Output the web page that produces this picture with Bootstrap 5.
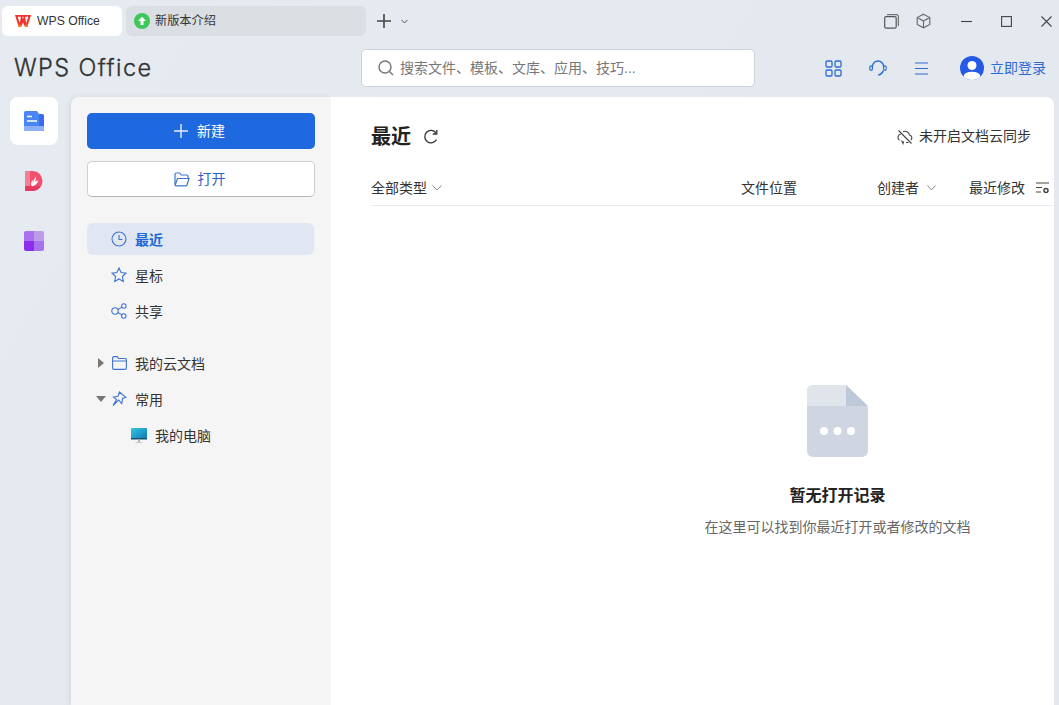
<!DOCTYPE html>
<html lang="zh-CN">
<head>
<meta charset="utf-8">
<title>WPS Office</title>
<link href="https://cdn.jsdelivr.net/npm/bootstrap@5.3.0/dist/css/bootstrap.min.css" rel="stylesheet">
<style>
html,body{height:100%;margin:0;overflow:hidden}
body{font-family:"Liberation Sans","Noto Sans CJK SC",sans-serif;font-size:14px;color:#333;background:linear-gradient(120deg,#e6ebf1,#e4e9f0 60%,#e3e8ef)}
svg{display:block;flex:none}
.app-shell{width:1059px;height:705px}
.tab-strip{height:36px;padding:6px 0 0 2px}
.wps-tab{height:30px;border-radius:6px;font-size:12.2px;color:#333}
.tab-home{width:120px;background:#fff;padding-left:13px;gap:6px}
.tab-new{width:240px;background:#dadfe4;margin-left:4px;padding-left:8px;gap:5px}
.new-dot{width:16px;height:16px;border-radius:50%;background:#3dc85a}
.tab-add{margin-left:11px;gap:10px;height:30px}
.win-tools{margin-left:auto;height:30px;padding-right:7px}
.win-a{margin-right:17px}
.win-b{margin-left:29px}
.win-first{margin-left:30px}
.tool-row{height:61px;padding-top:3px}
.brand-word{font-family:"Inter",sans-serif;font-weight:300;font-size:23.5px;letter-spacing:1.4px;color:#333;margin-left:14px;width:347px;line-height:1;-webkit-text-stroke:.35px #333}
.search-box{width:394px;height:38px;background:#fff;border:1px solid #cfd3d9;border-radius:5px;padding-left:15px;gap:5px;color:#777;font-size:14px}
.top-icons{margin-left:70px}
.top-i{width:44px}
.top-i-wide{width:46px}
.top-i-menu{width:45px}
.user-dot{width:24px;height:24px;border-radius:50%;background:#2559e6;overflow:hidden}
.login-link{color:#2a69d6;font-size:14px;margin-left:6px}
.main-area{height:608px}
.rail-col{width:71px;padding:0 13px 0 10px}
.rail-item{width:48px;height:48px;border-radius:8px;margin-bottom:12px}
.rail-on{background:#fff}
.side-col{width:260px;background:#f5f5f5;border-top-left-radius:8px;padding:16px;box-shadow:-2px 0 5px rgba(80,90,110,.1)}
.new-btn{width:228px;height:36px;background:#1f69e0;color:#fff;border:0;border-radius:5px;font-size:14px;gap:9px;padding:0 3px 0 0}
.open-btn{width:228px;height:36px;background:#fff;color:#2a62c8;border:1px solid #cfcfcf;border-bottom-color:#b5b5b5;border-radius:5px;font-size:14px;gap:8px;margin-top:12px;padding:0 3px 0 0}
.new-btn:hover{background:#1f69e0;color:#fff}
.open-btn:hover{background:#fff;color:#2a62c8}
.side-nav{margin-top:26px}
.side-row{height:36px;padding-left:24px;gap:8px;color:#333}
.side-row span{padding-top:2px}
.side-on{height:32px;width:227px;background:#e0e7f2;border-radius:6px;color:#2167d8;font-weight:700;margin-bottom:2px}
.side-gap{margin-top:16px}
.arrow-right{margin-left:-14px;margin-right:-1px}
.arrow-down{margin-left:-15px;margin-right:-3px}
.side-sub{padding-left:44px}
.content-col{width:723px;background:#fff;border-top-right-radius:8px;padding:0 0 0 40px}
.head-row{height:79px;padding-right:23px}
.page-name{font-size:20px;font-weight:700;color:#222;margin:0;line-height:1}
.reload-mark{margin-left:12px}
.sync-note{margin-left:auto;gap:6px;color:#333}
.filter-row{height:30px;border-bottom:1px solid #eaedf0;padding-bottom:5px;color:#333}
.type-cell{width:74px;gap:5px}
.col-place{margin-left:296px}
.col-maker{margin-left:80px;gap:8px}
.col-date{margin-left:33px}
.filter-cog{margin-left:11px}
.empty-wrap{margin:179px 0 0 250px}
.empty-name{font-size:16px;font-weight:700;color:#222;margin:29px 0 0;line-height:20px}
.empty-note{font-size:14px;color:#666;margin:11px 0 0;line-height:20px}
</style>
</head>
<body>
<div class="app-shell d-flex flex-column">
  <div class="tab-strip d-flex align-items-start">
    <div class="wps-tab tab-home d-flex align-items-center">
      <svg width="16" height="12" viewBox="0 0 16 12"><path d="M0 0h16l-3.700 12H10L8 7.500 6 12H3.700Z" fill="#f0332a"/><path d="M2.700 1.800h3.200L4.800 8.200ZM13.300 1.800h-3.200l1.100 6.400ZM7.300 1.800h1.400L8 4.300Z" fill="#fff"/><path d="M3.700 12 3 9.500h2.800L6 12ZM10 12l.2-2.500H13l-.7 2.500Z" fill="#f7772a"/></svg>
      <span>WPS Office</span>
    </div>
    <div class="wps-tab tab-new d-flex align-items-center">
      <span class="new-dot d-flex align-items-center justify-content-center"><svg width="10" height="10" viewBox="0 0 10 10"><path d="M5 .8 9 5H6.500v4h-3V5H1Z" fill="#fff"/></svg></span>
      <span>新版本介绍</span>
    </div>
    <div class="tab-add d-flex align-items-center">
      <svg width="14" height="14" viewBox="0 0 14 14"><path d="M7 0v14M0 7h14" stroke="#444" stroke-width="1.600"/></svg>
      <svg width="7" height="5" viewBox="0 0 7 5"><path d="M.4.800 3.500 4 6.600.800" stroke="#555" fill="none"/></svg>
    </div>
    <div class="win-tools d-flex align-items-center">
      <svg class="win-a" width="15" height="15" viewBox="0 0 15 15"><rect x=".7" y="2.700" width="11.500" height="11.500" rx="1.500" fill="none" stroke="#555" stroke-width="1.200"/><path d="M3 .7h10a1.300 1.300 0 0 1 1.300 1.300v10" fill="none" stroke="#555"/></svg>
      <svg width="15" height="16" viewBox="0 0 15 16"><path d="M7.500 1.200 13.800 4.500v7L7.500 14.800 1.200 11.500v-7ZM1.200 4.500 7.500 8l6.300-3.500M7.500 8v6.800" fill="none" stroke="#666" stroke-width="1.100"/></svg>
      <svg class="win-first" width="11" height="11" viewBox="0 0 11 11"><path d="M0 5.500h11" stroke="#444" stroke-width="1.100"/></svg>
      <svg class="win-b" width="11" height="11" viewBox="0 0 11 11"><rect x=".6" y=".6" width="9.800" height="9.800" fill="none" stroke="#444" stroke-width="1.100"/></svg>
      <svg class="win-b" width="11" height="11" viewBox="0 0 11 11"><path d="M.5.500l10 10M10.500.500l-10 10" stroke="#444" stroke-width="1.100"/></svg>
    </div>
  </div>

  <div class="tool-row d-flex align-items-center">
    <div class="brand-word">WPS Office</div>
    <div class="search-box d-flex align-items-center">
      <svg width="18" height="18" viewBox="0 0 18 18"><circle cx="8" cy="8" r="6" fill="none" stroke="#777" stroke-width="1.400"/><path d="m12.500 12.500 3.500 3.500" stroke="#777" stroke-width="1.400"/></svg>
      <span>搜索文件、模板、文库、应用、技巧...</span>
    </div>
    <div class="top-icons d-flex align-items-center">
      <div class="top-i"><svg width="17" height="17" viewBox="0 0 17 17" fill="none" stroke="#2f6bd0" stroke-width="1.300"><rect x="1" y="1" width="6" height="6" rx="1.200"/><rect x="10" y="1" width="6" height="6" rx="1.200"/><rect x="1" y="10" width="6" height="6" rx="1.200"/><rect x="10" y="10" width="6" height="6" rx="1.200"/></svg></div>
      <div class="top-i-wide"><svg width="18" height="16" viewBox="0 0 18 16" fill="none" stroke="#2f6bd0" stroke-width="1.500"><path d="M3.300 7.500V6.800a5.700 5.700 0 0 1 11.400 0v.7"/><path d="M14.200 10.500c-.6 2.500-2.500 4-5 4.400"/><rect x=".8" y="5.800" width="2.600" height="4.600" rx="1.300" stroke-width="1.100"/><rect x="14.600" y="5.800" width="2.600" height="4.600" rx="1.300" stroke-width="1.100"/></svg></div>
      <div class="top-i-menu"><svg width="13" height="13" viewBox="0 0 13 13" stroke="#2f6bd0" stroke-width="1.200"><path d="M0 1h13M0 6.500h13M0 12h13"/></svg></div>
      <div class="user-dot"><svg width="24" height="24" viewBox="0 0 24 24"><circle cx="12" cy="9.500" r="4.500" fill="#fff"/><ellipse cx="12" cy="20.500" rx="8.500" ry="4.800" fill="#fff"/></svg></div>
      <span class="login-link">立即登录</span>
    </div>
  </div>

  <div class="main-area d-flex">
    <div class="rail-col d-flex flex-column">
      <div class="rail-item rail-on d-flex align-items-center justify-content-center">
        <svg width="20" height="20" viewBox="0 0 20 20"><path d="M10 3h8.500A1.500 1.500 0 0 1 20 4.500V20H10Z" fill="#3f69ef"/><path d="M1.500 0H13l2 3v17H1.500A1.500 1.500 0 0 1 0 18.500v-17A1.500 1.500 0 0 1 1.500 0Z" fill="#4a86f3"/><path d="M0 15h20v3.500a1.500 1.500 0 0 1-1.500 1.500h-17A1.500 1.500 0 0 1 0 18.500Z" fill="#8bb0f8"/><path d="M3 5.500h5M3 10h10" stroke="#fff" stroke-width="1.600"/></svg>
      </div>
      <div class="rail-item d-flex align-items-center justify-content-center">
        <svg width="18" height="20" viewBox="0 0 18 20"><path d="M1 0h7a9.500 10 0 0 1 0 20H1a1 1 0 0 1-1-1V1a1 1 0 0 1 1-1Z" fill="#f2506f"/><path d="M0 1a1 1 0 0 1 1-1h4v15H0Z" fill="#f57e96"/><path d="M0 15h15.700a9.500 10 0 0 1-7.700 5H1a1 1 0 0 1-1-1Z" fill="#e63a60"/><path d="M7 15.500c-1.500-2-1.300-4.500.7-6.500.3 1.500.2 2.500.2 3.500.2-2.500 2-5 2.600-7 .7 2 .3 4-1 5.800 1-1 2.500-1.700 3.800-1.800-.6 2.800-3 5-6.300 6Z" fill="#fff"/></svg>
      </div>
      <div class="rail-item d-flex align-items-center justify-content-center">
        <svg width="20" height="20" viewBox="0 0 20 20"><path d="M2 0h8v10H0V2a2 2 0 0 1 2-2Z" fill="#a872ee"/><path d="M10 0h8a2 2 0 0 1 2 2v8H10Z" fill="#bd9bea"/><path d="M0 10h10v10H2a2 2 0 0 1-2-2Z" fill="#8b2eee"/><path d="M10 10h10v8a2 2 0 0 1-2 2h-8Z" fill="#a872ee"/></svg>
      </div>
    </div>

    <div class="side-col">
      <button type="button" class="btn new-btn d-flex align-items-center justify-content-center">
        <svg width="14" height="14" viewBox="0 0 14 14"><path d="M7 0v14M0 7h14" stroke="#e8eefb" stroke-width="1.400"/></svg>新建
      </button>
      <button type="button" class="btn open-btn d-flex align-items-center justify-content-center">
        <svg width="16" height="15" viewBox="0 0 16 15" fill="none" stroke="#3d74d0" stroke-width="1.200"><path d="M1 12.500V2.500A1.500 1.500 0 0 1 2.500 1h3.200l1.500 2h5.300A1.500 1.500 0 0 1 14 4.500V6"/><path d="M1 13.500 3.500 6.500H15l-2 6.500a1 1 0 0 1-1 .8H2a1 1 0 0 1-1-.8Z"/></svg>打开
      </button>
      <div class="side-nav d-flex flex-column">
        <div class="side-row side-on d-flex align-items-center">
          <svg width="16" height="16" viewBox="0 0 16 16" fill="none" stroke="#3d74d0" stroke-width="1.100"><circle cx="8" cy="8" r="7"/><path d="M8 4v4.500h3.500"/></svg><span>最近</span>
        </div>
        <div class="side-row d-flex align-items-center">
          <svg width="16" height="16" viewBox="0 0 16 16" fill="none" stroke="#3d74d0" stroke-width="1.100"><path d="m8 1 2.100 4.500 4.900.6-3.600 3.400.9 4.900L8 12l-4.300 2.400.9-4.900L1 6.100l4.900-.6Z"/></svg><span>星标</span>
        </div>
        <div class="side-row d-flex align-items-center">
          <svg width="16" height="16" viewBox="0 0 16 16" fill="none" stroke="#3d74d0" stroke-width="1.100"><circle cx="4" cy="8" r="3.200"/><circle cx="12.800" cy="3" r="2.200"/><circle cx="12.800" cy="13" r="2.200"/><path d="m7 6.500 3.900-2.400M7 9.500l3.900 2.400"/></svg><span>共享</span>
        </div>
        <div class="side-row side-gap d-flex align-items-center">
          <svg class="arrow-right" width="8" height="10" viewBox="0 0 8 10"><path d="M1 0v10l6-5Z" fill="#777"/></svg>
          <svg width="15" height="14" viewBox="0 0 15 14" fill="none" stroke="#3d74d0" stroke-width="1.100"><path d="M.6 3.500V2A1.400 1.400 0 0 1 2 .6h3.200l1.300 1.900h6.500A1.400 1.400 0 0 1 14.400 4v8A1.400 1.400 0 0 1 13 13.400H2A1.400 1.400 0 0 1 .6 12ZM.6 5h13.800"/></svg><span>我的云文档</span>
        </div>
        <div class="side-row d-flex align-items-center">
          <svg class="arrow-down" width="10" height="8" viewBox="0 0 10 8"><path d="M0 1h10L5 7Z" fill="#777"/></svg>
          <svg width="16" height="16" viewBox="0 0 16 16" fill="none" stroke="#3d74d0" stroke-width="1.100"><path d="M8.500 1 15 6.500l-3.300.8-1 5.200-3-3.500L2 14.500l3.500-6L2.500 6l4.500-.8Z"/></svg><span>常用</span>
        </div>
        <div class="side-row side-sub d-flex align-items-center">
          <svg width="16" height="15" viewBox="0 0 16 15"><defs><linearGradient id="screenFill" x1="0" y1="0" x2="1" y2="1"><stop offset="0" stop-color="#35c5dd"/><stop offset="1" stop-color="#0d79b8"/></linearGradient></defs><rect width="16" height="11" rx="1" fill="url(#screenFill)"/><path d="M0 10h16v1.500H0Z" fill="#15536e"/><path d="M7 11.500h2V14H7Z" fill="#a9b7c2"/><path d="M4.500 14h7v1h-7Z" fill="#c2ccd4"/></svg><span>我的电脑</span>
        </div>
      </div>
    </div>

    <div class="content-col">
      <div class="head-row d-flex align-items-center">
        <h1 class="page-name">最近</h1>
        <svg class="reload-mark" width="16" height="16" viewBox="0 0 16 16" fill="none" stroke="#333" stroke-width="1.300"><path d="M13.500 10.500A6.200 6.200 0 1 1 13 4"/><path d="M13.800 1v4h-4"/></svg>
        <div class="sync-note d-flex align-items-center">
          <svg width="16" height="16" viewBox="0 0 16 16" fill="none" stroke="#444" stroke-width="1.100"><path d="M1.500 1.500 14.500 14.500M3.800 5a3.400 3.400 0 0 0-1.300 6.200M6 2.800A4.500 4.500 0 0 1 12.500 6a3 3 0 0 1 1.500 5M4.500 11.500l1.500 3 .6-2.200M9 13.500h2.500"/></svg>
          <span>未开启文档云同步</span>
        </div>
      </div>
      <div class="filter-row d-flex align-items-center">
        <div class="type-cell d-flex align-items-center"><span>全部类型</span><svg width="10" height="6" viewBox="0 0 10 6"><path d="M.5.500 5 5 9.500.500" stroke="#888" fill="none"/></svg></div>
        <span class="col-place">文件位置</span>
        <div class="col-maker d-flex align-items-center"><span>创建者</span><svg width="9" height="6" viewBox="0 0 9 6"><path d="M.5.500 4.500 5 8.500.500" stroke="#888" fill="none"/></svg></div>
        <span class="col-date">最近修改</span>
        <svg class="filter-cog" width="13" height="12" viewBox="0 0 13 12" fill="none" stroke="#444" stroke-width="1.100"><path d="M0 1h13M0 5.500h6M0 10h5"/><circle cx="10" cy="8.500" r="2" stroke-width="1.500"/></svg>
      </div>
      <div class="empty-wrap d-flex flex-column align-items-center">
        <svg width="61" height="72" viewBox="0 0 61 72"><path d="M6 0h33l22 22v44a6 6 0 0 1-6 6H6a6 6 0 0 1-6-6V6a6 6 0 0 1 6-6Z" fill="#cfd6e2"/><path d="M6 0h33v21H0V6a6 6 0 0 1 6-6Z" fill="#e0e4eb"/><path d="M39 0l22 21H39Z" fill="#bdc9d9"/><circle cx="17" cy="46" r="4" fill="#fff"/><circle cx="30.500" cy="46" r="4" fill="#fff"/><circle cx="44" cy="46" r="4" fill="#fff"/></svg>
        <p class="empty-name">暂无打开记录</p>
        <p class="empty-note">在这里可以找到你最近打开或者修改的文档</p>
      </div>
    </div>
  </div>
</div>
</body>
</html>
